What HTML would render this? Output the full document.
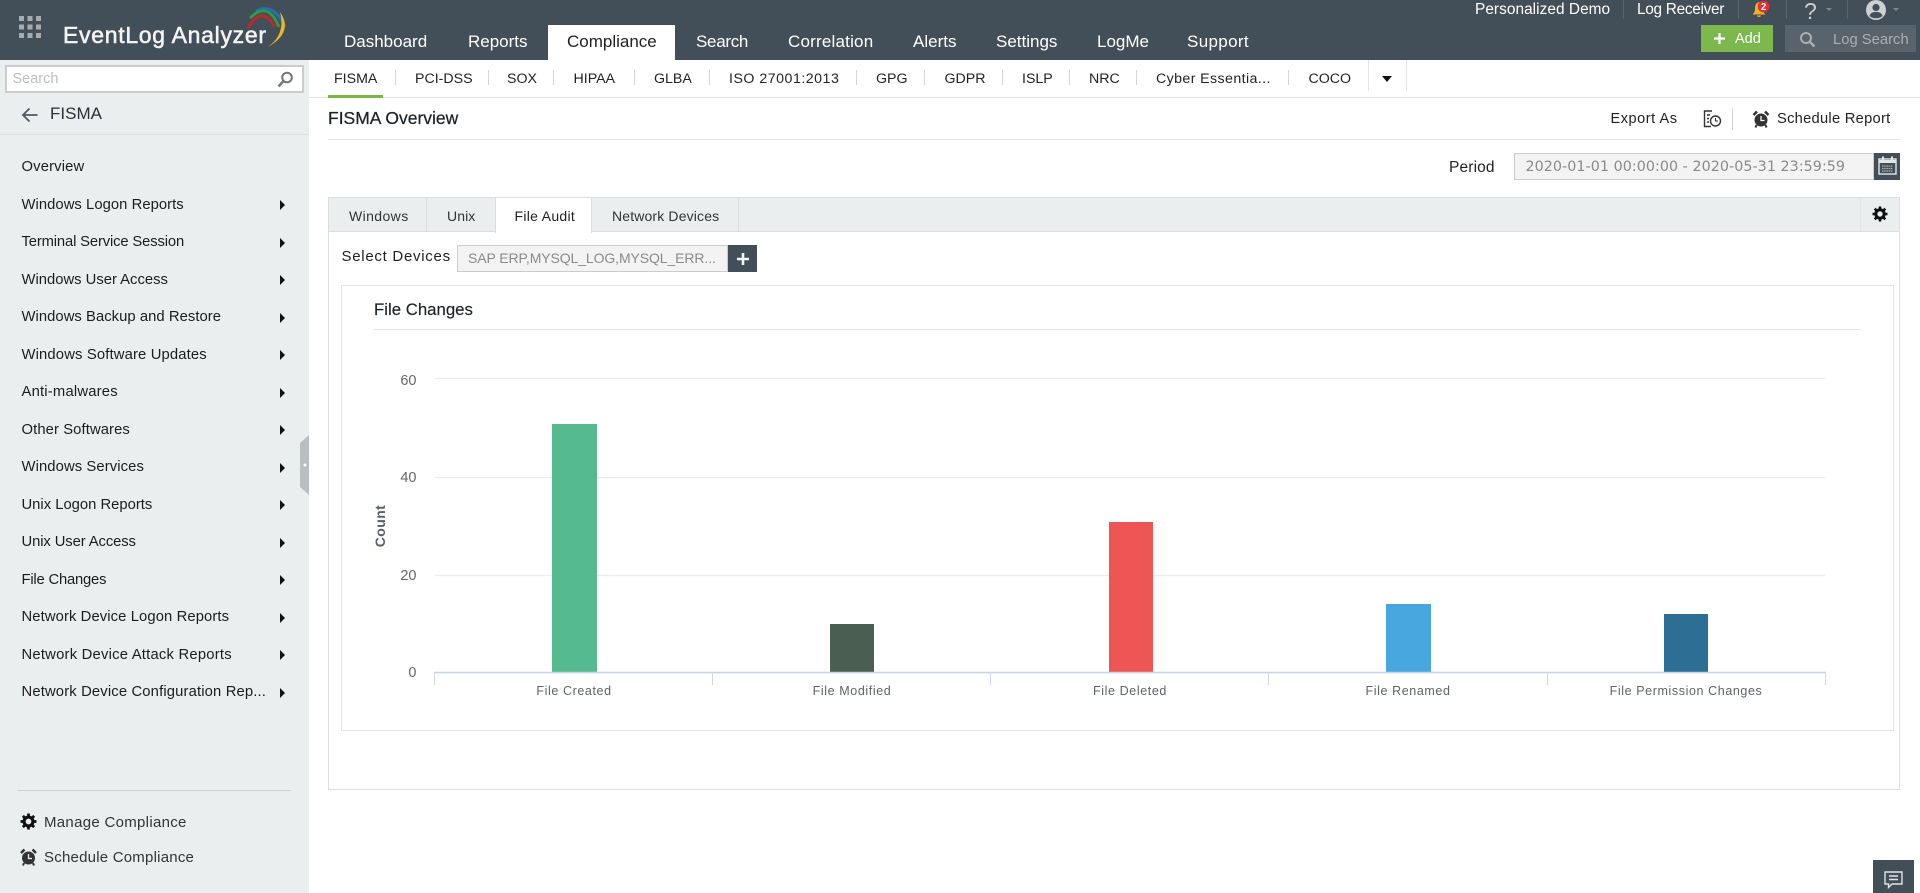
<!DOCTYPE html>
<html lang="en">
<head>
<meta charset="utf-8">
<title>FISMA Overview - EventLog Analyzer</title>
<style>
html,body{margin:0;padding:0;width:1920px;height:893px;overflow:hidden;background:#fff;font-family:"Liberation Sans",sans-serif;color:#222}
div,span,a,svg{position:absolute;display:block;box-sizing:border-box}
.t{white-space:nowrap;line-height:20px;height:20px}
#hdr{left:0;top:0;width:1920px;height:60px;background:#434f58}
.n{color:#fff;font-size:17px;top:32px}
.h{color:#fff;font-size:15.4px;top:0}
.vs{width:1px;background:#59646c;top:0;height:19px}
#side{left:0;top:60px;width:309px;height:833px;background:#ebeeef}
.m{left:21.5px;font-size:14.8px;margin-top:1px;color:#1c1c1c}
.ar{left:280px;width:0;height:0;border-left:5px solid #111;border-top:5px solid transparent;border-bottom:5px solid transparent}
.s{font-size:14.2px;top:69px;color:#222}
.sv{width:1px;background:#d4d6d7;top:70px;height:15px}
.line{background:#e2e4e5}
.tb{font-size:14px;top:206px;color:#333}
.xl{font-size:12.5px;color:#5f6468;text-anchor:middle;font-family:"Liberation Sans",sans-serif}
.yl{font-size:14.5px;color:#666;fill:#666;text-anchor:end;font-family:"Liberation Sans",sans-serif}
</style>
</head>
<body>

<div id="hdr"></div>
<!-- grid icon -->
<svg style="left:19px;top:16px" width="23" height="23" viewBox="0 0 23 23" fill="#a7abae">
<rect x="0" y="0" width="5" height="5"/><rect x="8.5" y="0" width="5" height="5"/><rect x="17" y="0" width="5" height="5"/>
<rect x="0" y="8.5" width="5" height="5"/><rect x="8.5" y="8.5" width="5" height="5"/><rect x="17" y="8.5" width="5" height="5"/>
<rect x="0" y="17" width="5" height="5"/><rect x="8.5" y="17" width="5" height="5"/><rect x="17" y="17" width="5" height="5"/>
</svg>
<div class="t" style="left:63px;top:23px;height:24px;line-height:24px;font-size:23px;letter-spacing:.7px;color:#f2f3f3;-webkit-text-stroke:.55px #f2f3f3">EventLog Analyzer</div>
<svg style="left:242px;top:0" width="52" height="52" viewBox="240 0 52 52" fill="none">
<path d="M254 11Q272 2 283 27" stroke="#2b6cb0" stroke-width="3"/>
<path d="M248 18Q266 0 277 27" stroke="#2c9b4a" stroke-width="3"/>
<path d="M246 28Q260 4 273 27" stroke="#c0272d" stroke-width="3"/>
<path d="M278 12Q292 32 266 47Q284 34 278 12Z" fill="#e8b923"/>
</svg>

<a class="t n" style="left:344px">Dashboard</a>
<a class="t n" style="left:468px">Reports</a>
<div style="left:548px;top:25px;width:127px;height:35px;background:#fff"></div>
<a class="t n" style="left:567px;color:#222">Compliance</a>
<a class="t n" style="left:696px;letter-spacing:-.3px">Search</a>
<a class="t n" style="left:788px;letter-spacing:.2px">Correlation</a>
<a class="t n" style="left:913px">Alerts</a>
<a class="t n" style="left:996px">Settings</a>
<a class="t n" style="left:1097px">LogMe</a>
<a class="t n" style="left:1187px;letter-spacing:.35px">Support</a>

<a class="t h" style="left:1475px;letter-spacing:.05px">Personalized Demo</a>
<div class="vs" style="left:1623px"></div>
<a class="t h" style="left:1637px;letter-spacing:-.3px">Log Receiver</a>
<div class="vs" style="left:1738px"></div>
<svg style="left:1751px;top:1px" width="21" height="18" viewBox="0 0 20 18">
<path d="M7.5 1C4 2 3.5 5 3.5 8C3.500 10.500 2.500 12 1 13.500H14C12.500 12 11.500 10.500 11.500 8C11.500 5 11 2 7.500 1Z" fill="#eeb026"/>
<path d="M5.500 14.500H9.500C9.500 16.500 5.500 16.500 5.500 14.500Z" fill="#eeb026"/>
<circle cx="12" cy="5.500" r="5.800" fill="#ea2c36"/>
<text x="12" y="9" font-size="10" font-weight="bold" text-anchor="middle" fill="#fff" font-family="Liberation Sans">2</text>
</svg>
<div class="vs" style="left:1786px"></div>
<div class="t" style="left:1804px;top:1px;color:#c9cdd0;font-size:23px">?</div>
<div style="left:1826px;top:8px;width:0;height:0;border:3.500px solid transparent;border-top:3.500px solid #7f888e;border-bottom:0"></div>
<div class="vs" style="left:1847px"></div>
<svg style="left:1866px;top:0" width="20" height="20" viewBox="0 0 20 20">
<circle cx="10" cy="10" r="10" fill="#cdd1d4"/><circle cx="10" cy="7.500" r="3.600" fill="#434f58"/><path d="M3.500 16C4.500 12.500 7 12 10 12S15.500 12.500 16.500 16C13 19 7 19 3.500 16Z" fill="#434f58"/>
</svg>
<div style="left:1893px;top:8px;width:0;height:0;border:3.500px solid transparent;border-top:3.500px solid #7f888e;border-bottom:0"></div>

<div style="left:1701px;top:25px;width:72px;height:27px;background:#7cb84e"></div>
<svg style="left:1714px;top:33px" width="11" height="11" viewBox="0 0 11 11"><path d="M5.500 0V11M0 5.500H11" stroke="#fff" stroke-width="2.200"/></svg>
<div class="t" style="left:1735px;top:29px;color:#fff;font-size:14.500px">Add</div>
<div style="left:1785px;top:25px;width:131px;height:27px;background:#58636b"></div>
<svg style="left:1799px;top:31px" width="17" height="17" viewBox="0 0 17 17" fill="none"><circle cx="7" cy="7" r="5" stroke="#a9afb3" stroke-width="2"/><path d="M10.500 10.500L15.500 15.500" stroke="#a9afb3" stroke-width="2.500"/></svg>
<div class="t" style="left:1833px;top:30px;color:#a9afb3;font-size:14.800px">Log Search</div>

<!-- Sidebar -->
<div id="side"></div>
<div style="left:5px;top:65px;width:299px;height:28px;background:#fff;border:2px solid #ccc"></div>
<div class="t" style="left:12.500px;top:69px;font-size:14.500px;color:#bdbdbd">Search</div>
<svg style="left:277px;top:71px" width="17" height="17" viewBox="0 0 17 17" fill="none"><circle cx="10" cy="6.500" r="4.800" stroke="#777" stroke-width="2"/><path d="M6.500 10L1.500 15.500" stroke="#777" stroke-width="2.500"/></svg>
<svg style="left:21px;top:107px" width="17" height="16" viewBox="0 0 17 16" fill="none"><path d="M16.500 8H2M8.500 1.500L2 8L8.500 14.500" stroke="#4f5a62" stroke-width="1.800"/></svg>
<div class="t" style="left:50px;top:104px;font-size:17px;color:#2a3036">FISMA</div>
<div class="line" style="left:0;top:134px;width:309px;height:1px;background:#dfe2e3"></div>

<a class="t m" style="top:156px;letter-spacing:.15px">Overview</a>
<a class="t m" style="top:194px;letter-spacing:.05px">Windows Logon Reports</a><div class="ar" style="top:200px"></div>
<a class="t m" style="top:231px;letter-spacing:-.15px">Terminal Service Session</a><div class="ar" style="top:238px"></div>
<a class="t m" style="top:269px">Windows User Access</a><div class="ar" style="top:275px"></div>
<a class="t m" style="top:306px;letter-spacing:.05px">Windows Backup and Restore</a><div class="ar" style="top:313px"></div>
<a class="t m" style="top:344px;letter-spacing:.15px">Windows Software Updates</a><div class="ar" style="top:350px"></div>
<a class="t m" style="top:381px;letter-spacing:.2px">Anti-malwares</a><div class="ar" style="top:388px"></div>
<a class="t m" style="top:419px;letter-spacing:.1px">Other Softwares</a><div class="ar" style="top:425px"></div>
<a class="t m" style="top:456px;letter-spacing:.1px">Windows Services</a><div class="ar" style="top:463px"></div>
<a class="t m" style="top:494px">Unix Logon Reports</a><div class="ar" style="top:500px"></div>
<a class="t m" style="top:531px;letter-spacing:-.1px">Unix User Access</a><div class="ar" style="top:538px"></div>
<a class="t m" style="top:569px;letter-spacing:-.2px">File Changes</a><div class="ar" style="top:575px"></div>
<a class="t m" style="top:606px;letter-spacing:.1px">Network Device Logon Reports</a><div class="ar" style="top:613px"></div>
<a class="t m" style="top:644px;letter-spacing:.22px">Network Device Attack Reports</a><div class="ar" style="top:650px"></div>
<a class="t m" style="top:681px;letter-spacing:.15px">Network Device Configuration Rep...</a><div class="ar" style="top:688px"></div>

<svg style="left:300px;top:435px" width="9" height="60" viewBox="0 0 9 60"><path d="M9 0V60L0 52V8Z" fill="#b9bfc1"/><circle cx="5" cy="30" r="1.500" fill="#fff"/></svg>

<div style="left:18px;top:790px;width:273px;height:1px;background:#cfd2d3"></div>
<svg style="left:20px;top:813px" width="17" height="17" viewBox="0 0 16 16" fill="none"><circle cx="8" cy="8" r="4.200" stroke="#111" stroke-width="3"/><path d="M8 .5V3.500M8 12.500V15.500M.5 8H3.500M12.500 8H15.500M2.700 2.700L4.800 4.800M11.200 11.200L13.300 13.300M13.300 2.700L11.200 4.800M4.800 11.200L2.700 13.300" stroke="#111" stroke-width="2.600"/></svg>
<a class="t" style="left:44px;top:813px;font-size:15px;letter-spacing:.3px;color:#333">Manage Compliance</a>
<svg style="left:20px;top:848px" width="17" height="18" viewBox="0 0 17 18"><circle cx="8.500" cy="10" r="6.500" fill="#333"/><path d="M1 5L4.500 1.500M16 5L12.500 1.500" stroke="#333" stroke-width="2.500"/><path d="M8.500 6V10.500H12" stroke="#ebeeef" stroke-width="1.300" fill="none"/><path d="M4 15L3 17.500M13 15L14 17.500" stroke="#333" stroke-width="2"/></svg>
<a class="t" style="left:44px;top:848px;font-size:15px;letter-spacing:.22px;color:#333">Schedule Compliance</a>

<!-- Sub nav -->
<a class="t s" style="left:334px">FISMA</a>
<div class="sv" style="left:395px"></div>
<a class="t s" style="left:415px">PCI-DSS</a>
<div class="sv" style="left:488px"></div>
<a class="t s" style="left:507px">SOX</a>
<div class="sv" style="left:553px"></div>
<a class="t s" style="left:573.500px">HIPAA</a>
<div class="sv" style="left:634px"></div>
<a class="t s" style="left:654px">GLBA</a>
<div class="sv" style="left:709px"></div>
<a class="t s" style="left:729px;letter-spacing:.5px">ISO 27001:2013</a>
<div class="sv" style="left:856px"></div>
<a class="t s" style="left:876px">GPG</a>
<div class="sv" style="left:924px"></div>
<a class="t s" style="left:944.500px">GDPR</a>
<div class="sv" style="left:1002px"></div>
<a class="t s" style="left:1022px">ISLP</a>
<div class="sv" style="left:1069px"></div>
<a class="t s" style="left:1089px">NRC</a>
<div class="sv" style="left:1136px"></div>
<a class="t s" style="left:1156px;letter-spacing:.4px">Cyber Essentia...</a>
<div class="sv" style="left:1288px"></div>
<a class="t s" style="left:1308.500px">COCO</a>
<div style="left:1368px;top:60px;width:1px;height:31px;background:#e2e4e5"></div>
<div style="left:1382px;top:76px;width:0;height:0;border:5.500px solid transparent;border-top:6px solid #111;border-bottom:0"></div>
<div style="left:1406px;top:60px;width:1px;height:31px;background:#e2e4e5"></div>
<div style="left:309px;top:97px;width:1611px;height:1px;background:#e2e4e5"></div>
<div style="left:328px;top:95px;width:55px;height:3px;background:#7ab648"></div>

<!-- Title -->
<div class="t" style="left:328px;top:108px;font-size:17.500px;color:#1d2226;-webkit-text-stroke:.25px #1d2226">FISMA Overview</div>
<div style="left:328px;top:139px;width:1572px;height:1px;background:#e2e4e5"></div>

<div class="t" style="left:1610.500px;top:109px;font-size:14.500px;letter-spacing:.55px;color:#222">Export As</div>
<svg style="left:1703px;top:110px" width="19" height="18" viewBox="0 0 19 18" fill="none"><path d="M9 1H1.500V16.500H8" stroke="#333" stroke-width="1.400"/><path d="M4 5H7M4 8.500H6M4 12H6" stroke="#333" stroke-width="1.400"/><circle cx="12.500" cy="11" r="5" fill="#fff" stroke="#333" stroke-width="1.400"/><path d="M12.500 8V11H15" stroke="#333" stroke-width="1.100"/></svg>
<div style="left:1732px;top:108px;width:1px;height:22px;background:#d0d3d5"></div>
<svg style="left:1752px;top:110px" width="18" height="18" viewBox="0 0 17 18"><circle cx="8.500" cy="10" r="6.500" fill="#333"/><path d="M1 5L4.500 1.500M16 5L12.500 1.500" stroke="#333" stroke-width="2.500"/><path d="M8.500 6V10.500H12" stroke="#fff" stroke-width="1.300" fill="none"/><path d="M4 15L3 17.500M13 15L14 17.500" stroke="#333" stroke-width="2"/></svg>
<div class="t" style="left:1777px;top:109px;font-size:14.700px;letter-spacing:.27px;color:#222">Schedule Report</div>

<div class="t" style="left:1449px;top:158px;font-size:15.500px;letter-spacing:.15px;color:#222">Period</div>
<div style="left:1514px;top:153px;width:360px;height:27px;background:#f3f3f3;border:1px solid #ccc"></div>
<div class="t" style="left:1525.500px;top:156.500px;font-family:'DejaVu Sans',sans-serif;font-size:14.300px;letter-spacing:.04px;color:#8a8a8a">2020-01-01 00:00:00 - 2020-05-31 23:59:59</div>
<div style="left:1874px;top:153px;width:26px;height:27px;background:#434f58"></div>
<svg style="left:1878px;top:156px" width="19" height="19" viewBox="0 0 19 19" fill="none"><rect x="1" y="3" width="17" height="15" stroke="#e3e6e8" stroke-width="1.400"/><path d="M1 5.500H18" stroke="#e3e6e8" stroke-width="3"/><path d="M5 .5V4M14 .5V4" stroke="#e3e6e8" stroke-width="2"/><path d="M4 10H15M4 12.500H15M4 15H15" stroke="#aeb5ba" stroke-width="1.300" stroke-dasharray="1.500 .7"/></svg>

<!-- Outer panel + tabs -->
<div style="left:328px;top:197px;width:1572px;height:593px;border:1px solid #ddd;background:#fff"></div>
<div style="left:328px;top:197px;width:1572px;height:35px;background:#ebeeef;border:1px solid #ddd;border-width:1px 1px 1px 1px"></div>
<div style="left:426px;top:197px;width:1px;height:35px;background:#ddd"></div>
<div style="left:495px;top:198px;width:97px;height:35px;background:#fff;border-left:1px solid #ddd;border-right:1px solid #ddd"></div>
<div style="left:738px;top:197px;width:1px;height:35px;background:#ddd"></div>
<a class="t tb" style="left:349px;letter-spacing:.4px">Windows</a>
<a class="t tb" style="left:447px;letter-spacing:.1px">Unix</a>
<a class="t tb" style="left:514.500px;letter-spacing:.3px;color:#222">File Audit</a>
<a class="t tb" style="left:612px;letter-spacing:.15px">Network Devices</a>
<div style="left:1860px;top:198px;width:39px;height:33px;background:#ebeeef;border-left:1px solid #e3e5e6"></div>
<svg style="left:1872px;top:206px" width="16" height="16" viewBox="0 0 16 16" fill="none"><circle cx="8" cy="8" r="4.200" stroke="#111" stroke-width="3"/><path d="M8 .5V3.500M8 12.500V15.500M.5 8H3.500M12.500 8H15.500M2.700 2.700L4.800 4.800M11.200 11.200L13.300 13.300M13.300 2.700L11.200 4.800M4.800 11.200L2.700 13.300" stroke="#111" stroke-width="2.600"/></svg>

<div class="t" style="left:341.500px;top:247px;font-size:15px;letter-spacing:.72px;color:#222">Select Devices</div>
<div style="left:457px;top:245px;width:271px;height:27px;background:#f3f3f3;border:1px solid #ccc"></div>
<div class="t" style="left:468px;top:248px;font-size:14px;letter-spacing:-.1px;color:#8a8a8a">SAP ERP,MYSQL_LOG,MYSQL_ERR...</div>
<div style="left:728px;top:245px;width:29px;height:27px;background:#434f58"></div>
<svg style="left:737px;top:253px" width="12" height="12" viewBox="0 0 12 12"><path d="M6 0V12M0 6H12" stroke="#f2f3f4" stroke-width="2.600"/></svg>

<!-- Chart panel -->
<div style="left:341px;top:285px;width:1553px;height:446px;border:1px solid #e5e5e5;background:#fff"></div>
<div class="t" style="left:374px;top:299.500px;font-size:16.800px;color:#1d2226;-webkit-text-stroke:.15px #1d2226">File Changes</div>
<div style="left:374px;top:329px;width:1487px;height:1px;background:#e5e6e7"></div>

<svg style="left:341px;top:330px" width="1553" height="400" viewBox="341 330 1553 400">
<g stroke="#ececec" stroke-width="1.200">
<path d="M435 378.500H1825M435 477.500H1825M435 575.500H1825"/>
</g>
<text class="yl" x="416.500" y="385">60</text>
<text class="yl" x="416.500" y="482">40</text>
<text class="yl" x="416.500" y="580">20</text>
<text class="yl" x="416.500" y="677">0</text>
<text transform="translate(385,526) rotate(-90)" text-anchor="middle" font-size="14" font-weight="bold" fill="#5a6065" letter-spacing=".4" font-family="Liberation Sans">Count</text>
<rect x="552" y="424" width="45" height="248" fill="#55bb8e"/>
<rect x="830" y="624" width="44" height="48" fill="#4a5e52"/>
<rect x="1109" y="522" width="44" height="150" fill="#ee5555"/>
<rect x="1386" y="604" width="45" height="68" fill="#48a7de"/>
<rect x="1664" y="614" width="44" height="58" fill="#2d6e94"/>
<path d="M434 672.500H1826" stroke="#c6d4e8" stroke-width="1.500"/>
<path d="M434.500 672V685M712.500 672V685M990.500 672V685M1268.500 672V685M1547.500 672V685M1825.500 672V685" stroke="#d0d8e4" stroke-width="1"/>
<text class="xl" fill="#5f6468" x="574" y="695" letter-spacing=".6">File Created</text>
<text class="xl" fill="#5f6468" x="852" y="695" letter-spacing=".6">File Modified</text>
<text class="xl" fill="#5f6468" x="1130" y="695" letter-spacing=".6">File Deleted</text>
<text class="xl" fill="#5f6468" x="1408" y="695" letter-spacing=".6">File Renamed</text>
<text class="xl" fill="#5f6468" x="1686" y="695" letter-spacing=".6">File Permission Changes</text>
</svg>

<!-- Chat -->
<div style="left:1873px;top:860px;width:41px;height:33px;background:#434f58"></div>
<svg style="left:1884px;top:871px" width="19" height="18" viewBox="0 0 19 18" fill="none"><path d="M1 1H18V13H8L4.500 16.500V13H1Z" stroke="#dfe3e5" stroke-width="1.400"/><path d="M5 5H14M5 8.500H14" stroke="#dfe3e5" stroke-width="1.400"/></svg>

</body>
</html>
